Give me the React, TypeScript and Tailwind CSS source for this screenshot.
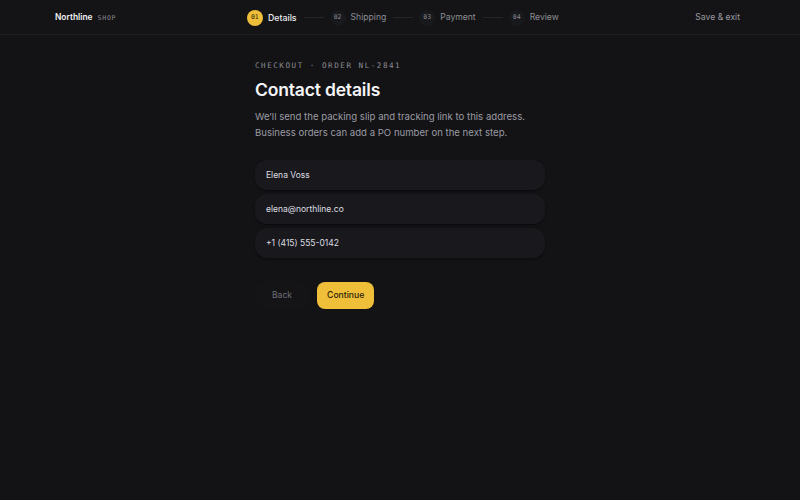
import React from 'react';

interface Step {
  num: string;
  label: string;
  active?: boolean;
}

const steps: Step[] = [
  { num: '01', label: 'Details', active: true },
  { num: '02', label: 'Shipping' },
  { num: '03', label: 'Payment' },
  { num: '04', label: 'Review' },
];

const fields = ['Elena Voss', 'elena@northline.co', '+1 (415) 555-0142'];

const App: React.FC = () => {
  return (
    <div className="min-h-[500px] w-full bg-[#131316] font-['Inter',sans-serif] text-white">
      <header className="flex h-[35px] items-center justify-between border-b border-[#1e1f23] bg-[#141417] pl-[55px] pr-[60px] pt-px">
        <div className="flex items-baseline gap-[5px]">
          <span className="text-[8.4px] font-semibold text-[#f1f1f3]">Northline</span>
          <span className="font-['DejaVu_Sans_Mono',monospace] text-[6.5px] tracking-[0.12em] text-[#8b8b92]">
            SHOP
          </span>
        </div>

        <nav className="mr-[6px] flex items-center">
          {steps.map((step, i) => (
            <div key={step.num} className="flex items-center">
              <div className="flex items-center gap-[5px]">
                <span
                  className={
                    step.active
                      ? "flex h-[16px] w-[16px] items-center justify-center rounded-full bg-[#efbf3a] font-['DejaVu_Sans_Mono',monospace] text-[6.5px] text-[#2a2205]"
                      : "flex h-[16px] w-[16px] items-center justify-center rounded-full bg-[#18191c] font-['DejaVu_Sans_Mono',monospace] text-[6.5px] text-[#8a8a91]"
                  }
                >
                  {step.num}
                </span>
                <span
                  className={
                    step.active
                      ? 'text-[8.8px] font-medium text-[#ededf0]'
                      : 'text-[8.6px] text-[#8d8d94]'
                  }
                >
                  {step.label}
                </span>
              </div>
              {i < steps.length - 1 && <div className="ml-[7px] mr-[6px] h-px w-[20px] bg-[#24252a]" />}
            </div>
          ))}
        </nav>

        <button className="text-[8.6px] text-[#9a9aa1]">Save &amp; exit</button>
      </header>

      <main className="mx-auto w-[290px] pt-[26px]">
        <p className="font-['DejaVu_Sans_Mono',monospace] text-[7.6px] leading-[10px] tracking-[0.2em] text-[#8d8d94]">
          CHECKOUT · ORDER NL-2841
        </p>
        <h1 className="mt-[8px] text-[17.5px] font-semibold leading-[22px] tracking-[-0.01em] text-[#f4f4f6]">
          Contact details
        </h1>
        <p className="mt-[8px] text-[9.6px] leading-[16px] text-[#9b9ba2]">
          We’ll send the packing slip and tracking link to this address.
          <br />
          Business orders can add a PO number on the next step.
        </p>

        <div className="mt-[19px] flex flex-col gap-[4px]">
          {fields.map((value) => (
            <div
              key={value}
              className="flex h-[30px] items-center rounded-[12px] bg-[#19191d] px-[11px] text-[8.5px] text-[#dedee2] shadow-[0_1px_2px_rgba(0,0,0,0.45)]"
            >
              {value}
            </div>
          ))}
        </div>

        <div className="mt-[24px] flex items-center gap-[8px]">
          <button className="h-[27px] rounded-lg bg-[#141417] px-[17px] text-[8.6px] text-[#6f6f76]">
            Back
          </button>
          <button className="h-[27px] rounded-lg bg-[#efbf3a] px-[10px] text-[8.6px] font-medium text-[#2a2206]">
            Continue
          </button>
        </div>
      </main>
    </div>
  );
};

export default App;
